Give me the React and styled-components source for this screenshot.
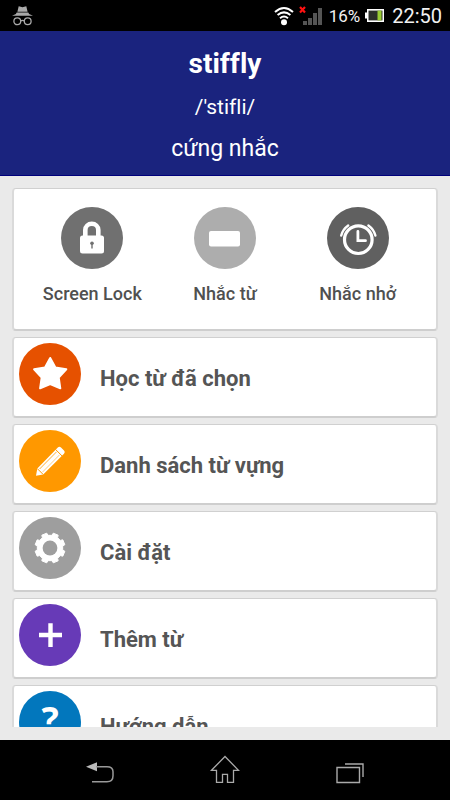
import React from "react";
import styled, { createGlobalStyle } from "styled-components";

const GlobalStyle = createGlobalStyle`
    * {
        box-sizing: border-box;
    }
    body {
        margin: 0;
        background: #000;
        font-family: Roboto, "Noto Sans", sans-serif;
    }
    h1, p, ul {
        margin: 0;
        padding: 0;
    }
`;

const Screen = styled.div`
    display: flex;
    flex-direction: column;
    height: 100vh;
    overflow: hidden;
`;

const StatusBar = styled.div`
    display: flex;
    align-items: center;
    flex: none;
    height: 31px;
    padding: 0 8px 0 12px;
    background: #000;
    color: #f2f2f2;
`;

const StatusGroup = styled.div`
    display: flex;
    align-items: center;
    margin-left: auto;
`;

const StatusIcon = styled.svg`
    display: block;
    flex: none;
    margin-right: ${(props) => props.$gap || 0}px;
`;

const Percent = styled.span`
    margin-right: 5px;
    font-size: 17px;
    line-height: 30px;
`;

const Clock = styled.span`
    font-size: 20px;
    line-height: 30px;
`;

const Header = styled.header`
    flex: none;
    padding: 11px 16px 5px;
    border-bottom: 1px solid #00007c;
    background: #1a237e;
    color: #fff;
    text-align: center;
`;

const Word = styled.h1`
    font-size: 28px;
    font-weight: 700;
    line-height: 44px;
    font-variant-ligatures: none;
`;

const HeaderText = styled.p`
    font-size: ${(props) => props.$size}px;
    line-height: 42px;
    font-variant-ligatures: none;
`;

const Main = styled.main`
    display: flex;
    flex-direction: column;
    flex: 1;
    min-height: 0;
    padding: 12px 12px 13px;
    background: #eaeaea;
`;

const Scroller = styled.div`
    flex: 1;
    min-height: 0;
    overflow: hidden;
`;

const QuickCard = styled.div`
    display: flex;
    padding: 18px 12px 22px;
    border: 1px solid #cfcfcf;
    border-width: 1px 2px 2px;
    border-color: #d0d0d0 #dadada #cecece;
    border-radius: 4px;
    background: #fff;
`;

const QuickButton = styled.button`
    display: flex;
    flex-direction: column;
    align-items: center;
    flex: 1;
    gap: 12px;
    padding: 0;
    border: 0;
    background: none;
    color: #505050;
    font-family: inherit;
    font-size: 18px;
    font-weight: 500;
    line-height: 26px;
`;

const Menu = styled.ul`
    display: flex;
    flex-direction: column;
    gap: 6px;
    margin-top: 6px;
    list-style: none;
`;

const MenuButton = styled.button`
    display: flex;
    align-items: center;
    gap: 19px;
    width: 100%;
    height: 81px;
    padding: 4px 5px 0;
    border: 1px solid #cfcfcf;
    border-width: 1px 2px 2px;
    border-color: #d0d0d0 #dadada #cecece;
    border-radius: 4px;
    background: #fff;
    color: #555;
    font-family: inherit;
    font-size: 22px;
    font-weight: 700;
    line-height: 32px;
    text-align: left;
`;

const Circle = styled.span`
    display: flex;
    align-items: center;
    justify-content: center;
    flex: none;
    width: 62px;
    height: 62px;
    margin-bottom: ${(props) => (props.$raised ? 10 : 0)}px;
    border-radius: 50%;
    background: ${(props) => props.$color};
    color: #fff;
`;

const Mark = styled.span`
    font-family: "Noto Sans", "Open Sans", sans-serif;
    font-size: 36px;
    font-weight: 700;
    line-height: 56px;
    padding-bottom: 4px;
`;

const NavBar = styled.nav`
    display: flex;
    align-items: center;
    justify-content: center;
    gap: 95px;
    flex: none;
    height: 60px;
    background: #000;
`;

const NavButton = styled.button`
    display: flex;
    padding: 0;
    border: 0;
    background: none;
`;

const LockIcon = () => (
    <svg width="62" height="62" viewBox="0 0 62 62" fill="none">
        <path d="M24.3 31V23a6.5 6.2 0 0 1 13 0v8" stroke="#fff" strokeWidth="4.6" />
        <rect x="19" y="28.5" width="24" height="18" rx="2.5" fill="#fff" />
        <circle cx="31" cy="36.3" r="1.8" fill="#707070" />
        <path d="M31 36v5.5" stroke="#707070" strokeWidth="1.4" />
    </svg>
);

const CardIcon = () => (
    <svg width="62" height="62" viewBox="0 0 62 62">
        <rect x="15" y="24" width="31" height="15.6" rx="2" fill="#fff" />
    </svg>
);

const AlarmIcon = () => (
    <svg width="62" height="62" viewBox="0 0 62 62" fill="none" stroke="#fff" strokeLinecap="round">
        <circle cx="31.3" cy="32.7" r="13.8" strokeWidth="3.2" />
        <path d="M30.9 24.5v9.2h7.6" strokeWidth="2.8" />
        <path d="M14.2 28.6q1.4-6.2 7-10.2M48.4 28.6q-1.4-6.2-7-10.2" strokeWidth="2.4" />
    </svg>
);

const StarIcon = () => (
    <svg width="62" height="62" viewBox="0 0 62 62">
        <path
            d="M31.2 15l5.2 9.6 10.9 1.7-7.6 8.2 1.6 10.8-10.1-4.3-10.1 4.3 1.6-10.8-7.6-8.2 10.9-1.7z"
            fill="#fff"
            stroke="#fff"
            strokeWidth="2"
            strokeLinejoin="round"
        />
    </svg>
);

const PencilIcon = () => (
    <svg width="62" height="62" viewBox="0 0 62 62">
        <path
            d="M17 45.8l1.3-7.3L38.8 17.6q1.6-1.5 3.2 0l3 3q1.6 1.6 0 3.2L24.2 44.6z"
            fill="#fff"
        />
        <path d="M18.3 38.6l5.9 5.9M36.5 19.4l6.7 6.7" stroke="#ff9800" strokeWidth="1" />
        <path d="M20.6 39l17-17.2" stroke="#ff9800" strokeWidth="0.8" />
        <path d="M23.4 42.2l17.2-17.4" stroke="#ff9800" strokeWidth="0.5" />
    </svg>
);

// eight teeth, starting half a step off the vertical
const gearPoints = () => {
    const points = [];
    for (let i = 0; i < 8; i++) {
        [[-10, 15.2], [10, 15.2], [14, 12.8], [31, 12.8]].forEach(([offset, radius]) => {
            const angle = ((22.5 + i * 45 + offset) * Math.PI) / 180;
            points.push(`${31 + radius * Math.cos(angle)},${31 + radius * Math.sin(angle)}`);
        });
    }
    return points.join(" ");
};

const GearIcon = () => (
    <svg width="62" height="62" viewBox="0 0 62 62">
        <polygon
            points={gearPoints()}
            fill="#fff"
            stroke="#fff"
            strokeWidth="1"
            strokeLinejoin="round"
        />
        <circle cx="31" cy="31" r="7.4" fill="#9e9e9e" />
    </svg>
);

const PlusIcon = () => (
    <svg width="62" height="62" viewBox="0 0 62 62">
        <path d="M20 31h23M31.5 19.3v23.6" stroke="#fff" strokeWidth="4.4" />
    </svg>
);

const IncognitoIcon = () => (
    <StatusIcon width="21" height="21" viewBox="0 0 21 21" fill="#aaa">
        <path d="M6.7 1.2l2 .5 1.8.5 1.8-.5 2-.5 1.3 5.5H5.4z" />
        <path d="M4.7 7.6h11.6l.8 1.3 3.9 1.9H0l3.9-1.9z" />
        <g fill="none" stroke="#aaa" strokeWidth="1.3">
            <circle cx="5.3" cy="16.3" r="3.4" />
            <circle cx="15.7" cy="16.3" r="3.4" />
            <path d="M8.7 15.8q1.8-.8 3.6 0" />
        </g>
    </StatusIcon>
);

const WifiIcon = () => (
    <StatusIcon $gap={5} width="20" height="20" viewBox="0 0 20 20">
        <circle cx="10" cy="16.2" r="3" fill="#fff" />
        <g fill="none" stroke="#fff" strokeWidth="2">
            <path d="M1 6q9-8 18 0" />
            <path d="M3.6 9.1q6.4-5.4 12.8 0" />
            <path d="M6 12.2q4-3.3 8 0" />
        </g>
    </StatusIcon>
);

const SignalIcon = () => (
    <StatusIcon $gap={6} width="24" height="20" viewBox="0 0 24 20">
        <path
            d="M4 15h4v4H4zM9 12h4v7H9zM14 7h4v12h-4zM19 2h4v17h-4z"
            fill="#555"
        />
        <path d="M1 1l5 5.4M6 1L1 6.4" stroke="#f11" strokeWidth="2.2" />
    </StatusIcon>
);

const BatteryIcon = () => (
    <StatusIcon $gap={8} width="19" height="15" viewBox="0 0 19 15">
        <path d="M2 1h17v13H2v-3.5H0v-6h2z" fill="#fff" />
        <path d="M3.5 2.6h14v9.8h-14z" fill="#2c2f2a" />
        <path d="M12.5 2.6h4v9.8h-4z" fill="#9c3" />
    </StatusIcon>
);

const BackIcon = () => (
    <svg width="30" height="30" viewBox="0 0 30 30">
        <path d="M1 11.8l11-4.5v9z" fill="#bbb" />
        <path d="M11 11.8h11q6 0 6 5v4q0 6-6 6H7" fill="none" stroke="#999" strokeWidth="1.5" />
    </svg>
);

const HomeIcon = () => (
    <svg width="30" height="30" viewBox="0 0 30 30">
        <path
            d="M1.5 15.3L15 1.5l13.5 13.8h-5v12h-6v-8h-5v8h-6v-12z"
            fill="none"
            stroke="#aaa"
            strokeWidth="1.3"
        />
    </svg>
);

const RecentIcon = () => (
    <svg width="30" height="30" viewBox="0 0 30 30" fill="none" stroke="#aaa" strokeWidth="1.4">
        <path d="M2 12.5h22.5v15H2z" />
        <path d="M10 9h18v13" />
    </svg>
);

const quickItems = [
    { label: "Screen Lock", color: "#707070", icon: <LockIcon /> },
    { label: "Nhắc từ", color: "#adadad", icon: <CardIcon /> },
    { label: "Nhắc nhở", color: "#606060", icon: <AlarmIcon /> },
];

const menuItems = [
    { label: "Học từ đã chọn", color: "#e65100", icon: <StarIcon /> },
    { label: "Danh sách từ vựng", color: "#ff9800", icon: <PencilIcon /> },
    { label: "Cài đặt", color: "#9e9e9e", icon: <GearIcon /> },
    { label: "Thêm từ", color: "#673ab7", icon: <PlusIcon /> },
    { label: "Hướng dẫn", color: "#0277bd", icon: <Mark aria-hidden="true">?</Mark> },
];

const App = () => {
    return (
        <Screen>
            <GlobalStyle />
            <StatusBar>
                <IncognitoIcon />
                <StatusGroup>
                    <WifiIcon />
                    <SignalIcon />
                    <Percent>16%</Percent>
                    <BatteryIcon />
                    <Clock>22:50</Clock>
                </StatusGroup>
            </StatusBar>
            <Header>
                <Word>stiffly</Word>
                <HeaderText $size={21}>/'stifli/</HeaderText>
                <HeaderText $size={23}>cứng nhắc</HeaderText>
            </Header>
            <Main>
                <Scroller>
                    <QuickCard>
                        {quickItems.map((item) => (
                            <QuickButton key={item.label} type="button">
                                <Circle $color={item.color}>{item.icon}</Circle>
                                {item.label}
                            </QuickButton>
                        ))}
                    </QuickCard>
                    <Menu>
                        {menuItems.map((item) => (
                            <li key={item.label}>
                                <MenuButton type="button">
                                    <Circle $color={item.color} $raised>
                                        {item.icon}
                                    </Circle>
                                    {item.label}
                                </MenuButton>
                            </li>
                        ))}
                    </Menu>
                </Scroller>
            </Main>
            <NavBar>
                <NavButton type="button" aria-label="Back">
                    <BackIcon />
                </NavButton>
                <NavButton type="button" aria-label="Home">
                    <HomeIcon />
                </NavButton>
                <NavButton type="button" aria-label="Recent apps">
                    <RecentIcon />
                </NavButton>
            </NavBar>
        </Screen>
    );
};

export default App;
